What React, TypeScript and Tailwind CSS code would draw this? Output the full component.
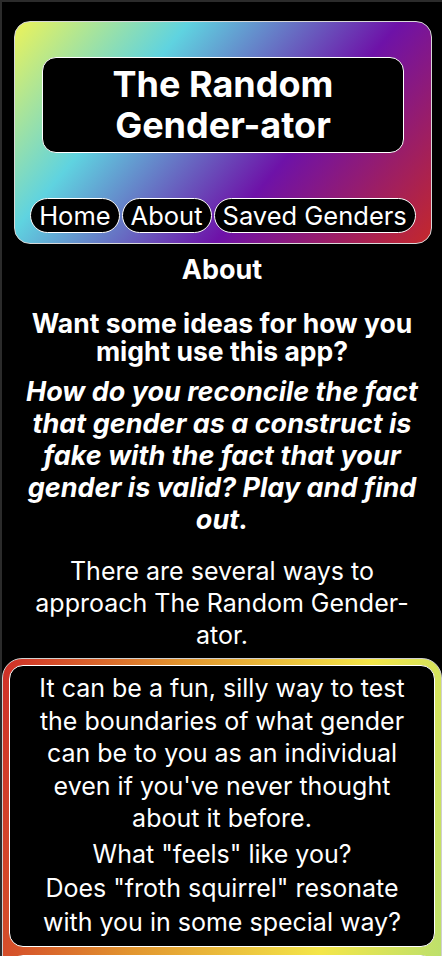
const NavButton = ({ label }: { label: string }) => (
  <button className="h-[35px] px-[8px] rounded-full bg-black border border-white text-white text-[25.5px] leading-none">
    {label}
  </button>
);

export default function App() {
  return (
    <div
      className="min-h-screen bg-black border-l-2 border-t-2 border-[#2b2b2b] text-white text-center overflow-hidden"
      style={{ fontFamily: 'Inter, "Noto Sans", sans-serif' }}
    >
      <header className="ml-3 mr-[10px] mt-[19px] rounded-[16px] border border-[#d8d8d8] bg-[linear-gradient(130deg,#ecf35a_0%,#5fd3e0_29%,#6e12a8_64%,#c4282b_100%)] pt-[35px] pb-[10px]">
        <div className="mx-[27px] rounded-[14px] border border-white bg-black py-[6px]">
          <h1 className="text-[36px] font-bold leading-[41px]">
            The Random
            <br />
            Gender-ator
          </h1>
        </div>
        <nav className="mt-[45px] flex justify-center gap-[2px]">
          <NavButton label="Home" />
          <NavButton label="About" />
          <NavButton label="Saved Genders" />
        </nav>
      </header>

      <main className="px-[20px]">
        <h2 className="mt-[10px] text-[27px] font-bold leading-[32px]">About</h2>
        <h3 className="mt-[23px] text-[26.5px] font-bold leading-[28px]">
          Want some ideas for how you might use this app?
        </h3>
        <p className="mt-[11px] text-[27px] font-bold italic leading-[32px]">
          How do you reconcile the fact that gender as a construct is fake with the fact that your
          gender is valid? Play and find out.
        </p>
        <p className="mt-[19px] text-[25px] leading-[32px]">
          There are several ways to approach The Random Gender-ator.
        </p>
      </main>

      <section className="mt-[7px] rounded-[20px] border border-[#d0d0d0] bg-[linear-gradient(100deg,#cf2f28_0%,#e2952f_35%,#f4e649_72%,#b3df72_100%)] p-[6px] flex flex-col gap-[8px]">
        <div className="rounded-[14px] border border-white bg-black px-3 pt-[6px] pb-[7px] text-[25px] leading-[32.5px]">
          <p>
            It can be a fun, silly way to test the boundaries of what gender can be to you as an
            individual even if you've never thought about it before.
          </p>
          <p className="mt-[2px] leading-[34px]">What "feels" like you?</p>
          <p className="leading-[34px]">Does "froth squirrel" resonate with you in some special way?</p>
        </div>
        <div className="h-[120px] rounded-[14px] border border-white bg-black" />
      </section>
    </div>
  );
}
